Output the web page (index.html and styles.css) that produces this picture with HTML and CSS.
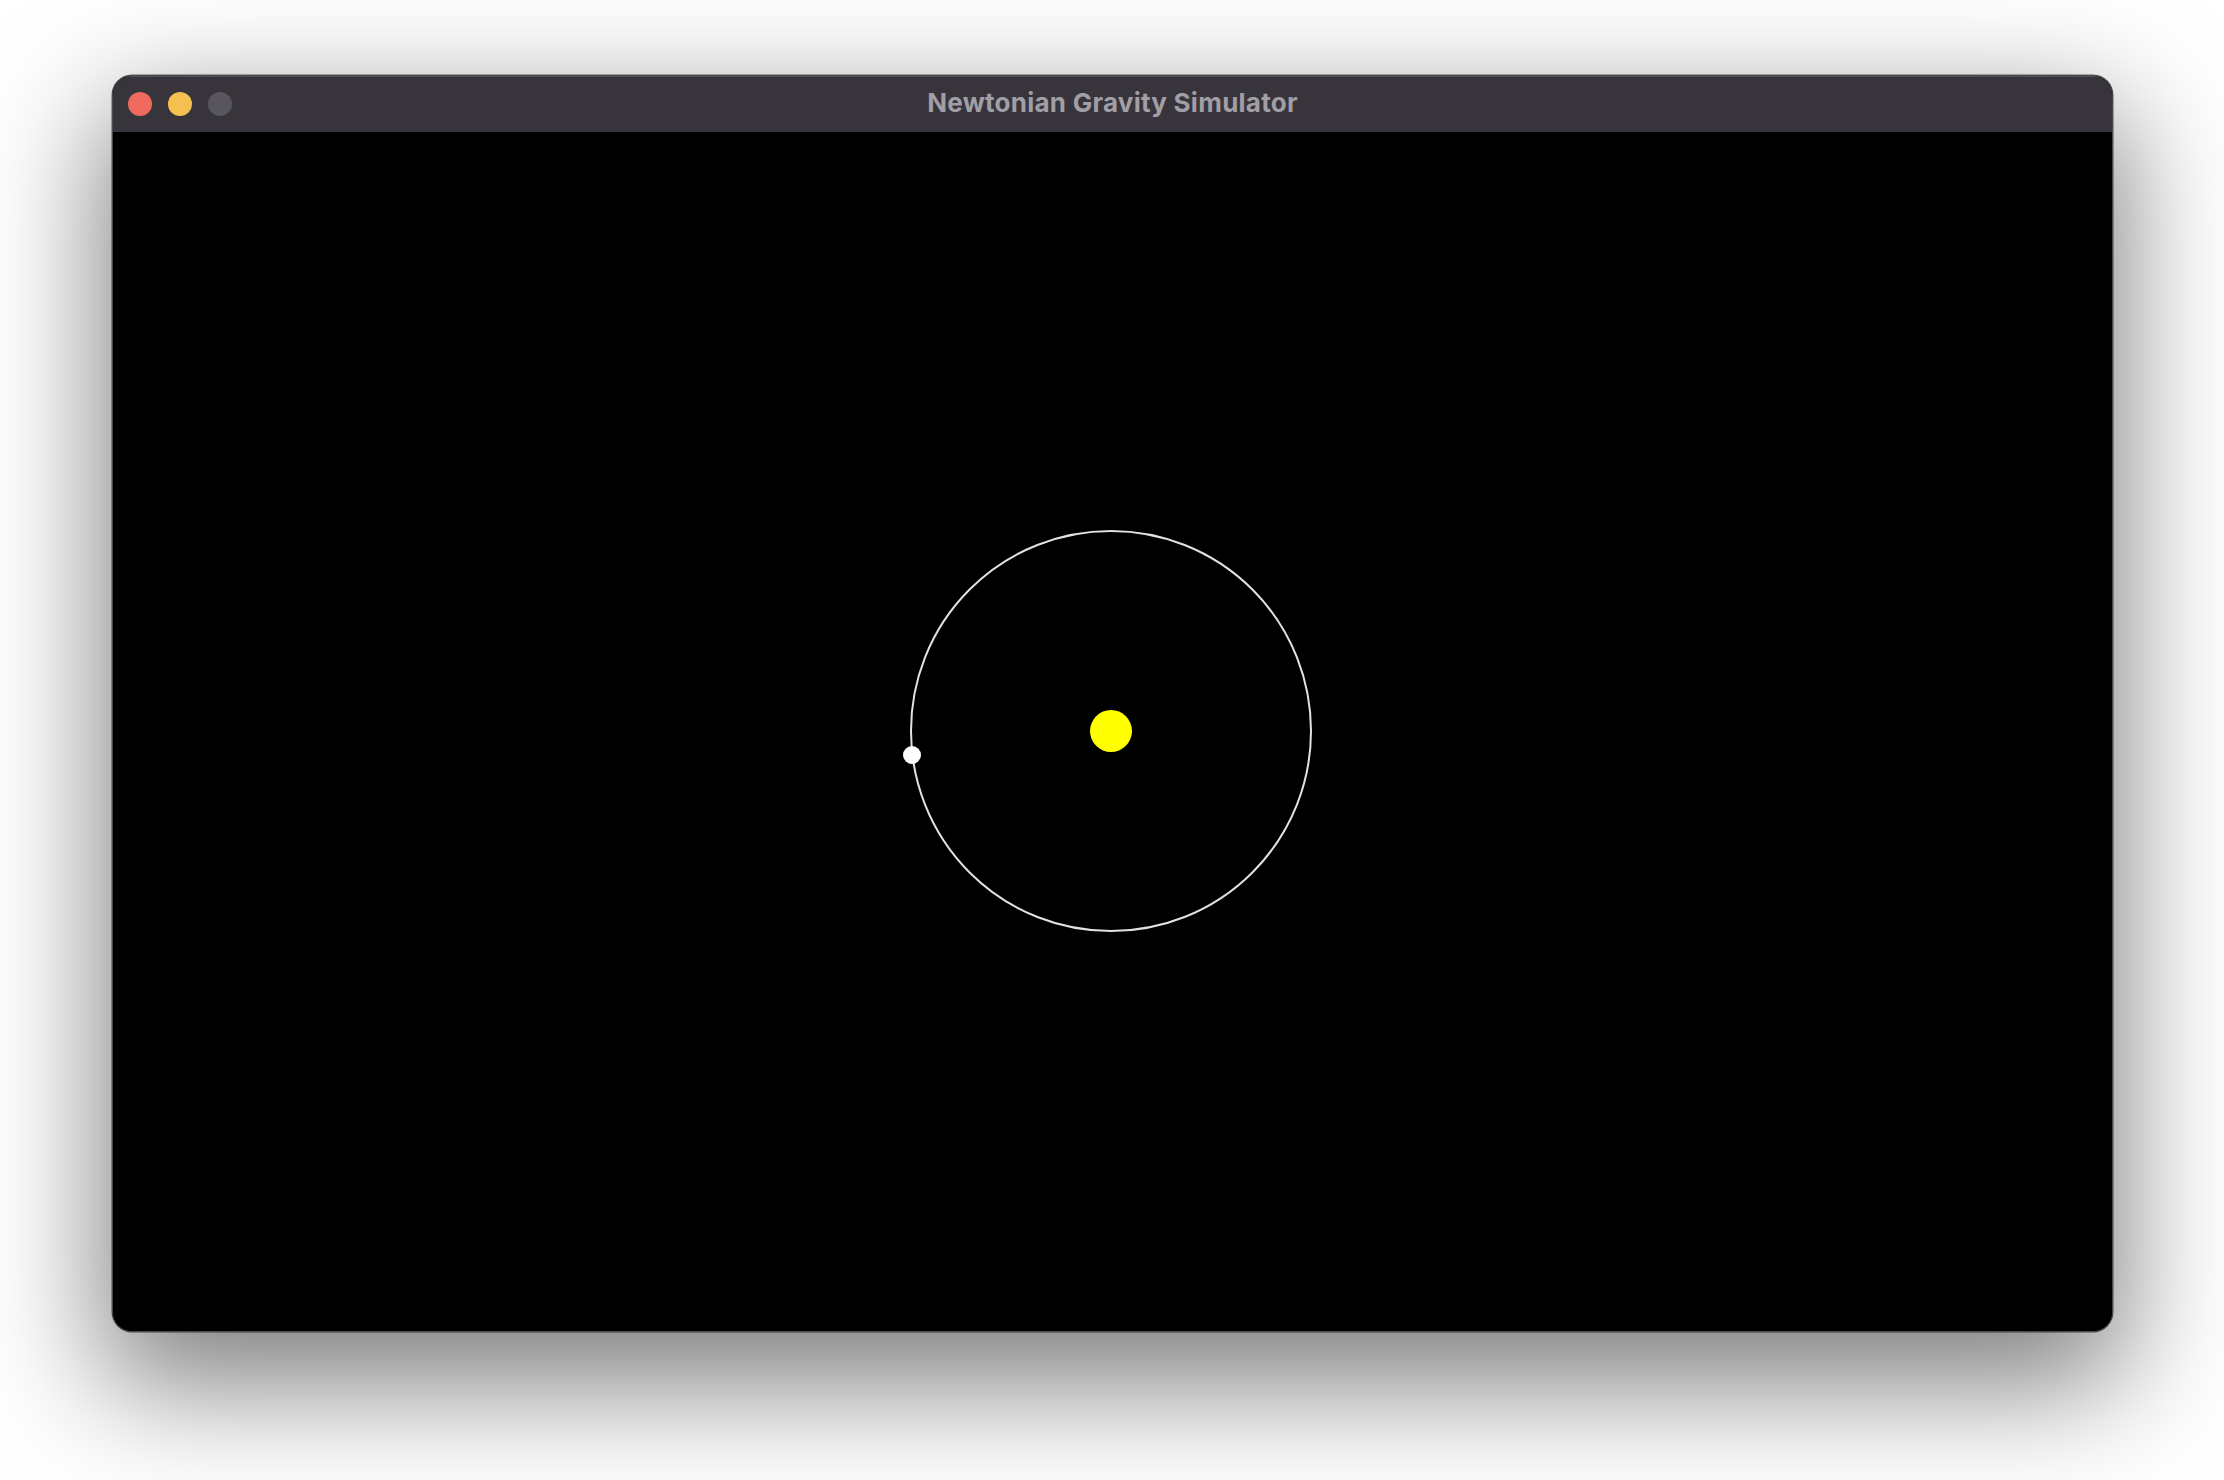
FILE: index.html
```html
<!DOCTYPE html>
<html>
<head>
<meta charset="utf-8">
<title>Newtonian Gravity Simulator</title>
<link rel="stylesheet" href="styles.css">
</head>
<body>
<div class="window">
  <div class="titlebar">
    <div class="lights">
      <span class="light red"></span>
      <span class="light yellow"></span>
      <span class="light gray"></span>
    </div>
    <div class="title">Newtonian Gravity Simulator</div>
  </div>
  <div class="canvas">
    <svg class="scene" width="1999" height="1199" viewBox="0 0 1999 1199" xmlns="http://www.w3.org/2000/svg">
      <circle cx="998" cy="599" r="200" fill="none" stroke="#e2e2e2" stroke-width="2"/>
      <circle cx="998" cy="599" r="21" fill="#ffff00"/>
      <circle cx="799" cy="623" r="9" fill="#ffffff"/>
    </svg>
  </div>
</div>
</body>
</html>
```

FILE: styles.css
```css
html, body {
  margin: 0;
  padding: 0;
}
body {
  background: #ffffff;
  width: 2224px;
  height: 1480px;
  overflow: hidden;
  padding: 75px 0 0 112px;
  box-sizing: border-box;
  font-family: "Inter", "Liberation Sans", sans-serif;
}
.window {
  width: 1999px;
  border: 1px solid #4a494e;
  border-radius: 20px;
  overflow: hidden;
  background: #000;
  box-shadow: 0 44px 120px 10px rgba(0, 0, 0, 0.5), 0 0 0 0.5px rgba(0,0,0,0.6);
}
.titlebar {
  height: 56px;
  background: #37343b;
  box-shadow: inset 0 1px 0 rgba(255, 255, 255, 0.12);
  display: flex;
  align-items: center;
  position: relative;
}
.lights {
  display: flex;
  gap: 16px;
  padding-left: 15px;
}
.light {
  width: 24px;
  height: 24px;
  border-radius: 50%;
  display: block;
}
.red { background: #ee6a5f; }
.yellow { background: #f5c04f; }
.gray { background: #58555c; }
.title {
  position: absolute;
  left: 0;
  right: 0;
  top: 11px;
  text-align: center;
  color: #a19ea6;
  font-size: 26px;
  line-height: 32px;
  font-weight: 700;
  letter-spacing: 0.25px;
}
.canvas {
  height: 1199px;
  background: #000;
}
.scene {
  display: block;
}
```
